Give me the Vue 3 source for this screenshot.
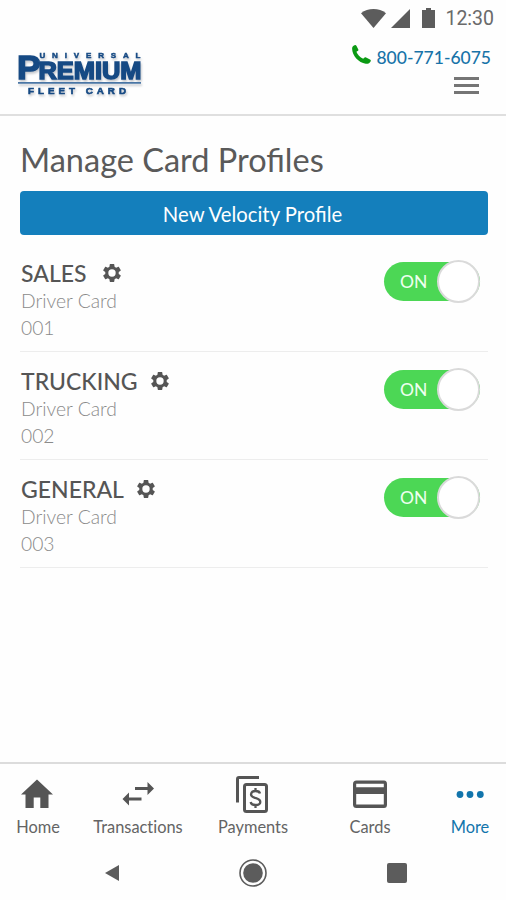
<template>
  <div class="screen">
    <div class="status-bar">
      <svg class="wifi" width="25" height="19" viewBox="0 0 25 19">
        <path d="M0 4.2C7 -1.4 18 -1.4 25 4.2L12.5 19z" />
      </svg>
      <svg class="signal" width="19" height="19" viewBox="0 0 19 19">
        <path d="M19 0v19H0z" />
      </svg>
      <svg class="battery" width="13" height="20" viewBox="0 0 13 20">
        <path d="M4 0h5v2h4v18H0V2h4z" />
      </svg>
      <span class="clock">12:30</span>
    </div>

    <header class="app-header">
      <svg class="logo" width="132" height="54" viewBox="0 0 132 54">
        <g fill="#164a84" stroke="#164a84" font-family="Liberation Sans, Arial, sans-serif" font-weight="700">
          <text x="21.5" y="14.2" font-size="8" textLength="101" stroke-width="0.5">UNIVERSAL</text>
          <g stroke-width="1.5">
            <text x="-1" y="34.7" font-size="34" textLength="23.5" lengthAdjust="spacingAndGlyphs">P</text>
            <text x="20.5" y="34.7" font-size="24" textLength="103" lengthAdjust="spacingAndGlyphs">REMIUM</text>
          </g>
          <text x="10" y="50" font-size="9.8" textLength="98" stroke-width="0.6">FLEET CARD</text>
        </g>
        <path d="M0 38.8h123" stroke="#4a76a5" stroke-width="1.8" />
      </svg>

      <div class="header-side">
        <a class="phone" href="tel:8007716075">
          <svg width="19" height="19" viewBox="0 0 19 19">
            <path
              d="M2.6.2C3.400-.1 4 .1 4.400.8L6.200 4.200C6.600 5 6.300 5.600 5.600 6L4.400 6.800C5.400 9.600 8 12.300 11.200 13.700L12.200 12.700C12.800 12.100 13.400 12 14.100 12.400L18 14.500C18.800 14.900 19 15.500 18.700 16.200C18 18 16 19 13.800 18.800C6.500 17.800 .2 10.500 .1 3.800C.1 2 1 .8 2.600 .2z"
            />
          </svg>
          <span>800-771-6075</span>
        </a>
        <button class="menu-btn" type="button" aria-label="Menu">
          <span></span>
          <span></span>
          <span></span>
        </button>
      </div>
    </header>

    <main class="content">
      <h1>Manage Card Profiles</h1>
      <button class="primary-btn" type="button">New Velocity Profile</button>

      <ul class="profiles">
        <li v-for="profile in profiles" :key="profile.code" class="profile">
          <div class="profile-info">
            <h2>
              <span>{{ profile.name }}</span>
              <svg width="18" height="18" viewBox="2 2 20 20">
                <path
                  fill-rule="evenodd"
                  d="M19.430 12.980c.04-.32.070-.64.070-.98s-.03-.66-.07-.98l2.110-1.650c.19-.15.240-.42.120-.64l-2-3.460c-.12-.22-.39-.3-.61-.22l-2.490 1c-.52-.4-1.080-.73-1.690-.98l-.38-2.650C14.460 2.180 14.250 2 14 2h-4c-.25 0-.46.180-.49.420l-.38 2.650c-.61.250-1.170.590-1.690.980l-2.490-1c-.23-.09-.49 0-.61.220l-2 3.460c-.13.220-.07.490.120.640l2.110 1.650c-.04.320-.07.650-.07.980s.03.660.070.980l-2.110 1.650c-.19.150-.24.420-.12.640l2 3.460c.12.220.390.300.610.220l2.490-1c.52.400 1.080.730 1.690.980l.38 2.650c.03.240.240.420.490.420h4c.25 0 .460-.18.490-.42l.38-2.650c.61-.25 1.170-.59 1.690-.98l2.490 1c.23.090.490 0 .610-.22l2-3.460c.12-.22.070-.49-.12-.64zM12 16.100a4.100 4.100 0 1 1 0-8.200 4.100 4.100 0 0 1 0 8.200z"
                />
              </svg>
            </h2>
            <p>{{ profile.type }}</p>
            <p>{{ profile.code }}</p>
          </div>
          <button
            class="toggle"
            :class="{ on: profile.enabled }"
            type="button"
            @click="profile.enabled = !profile.enabled"
          >
            <span class="toggle-label">{{ profile.enabled ? "ON" : "OFF" }}</span>
            <span class="toggle-knob"></span>
          </button>
        </li>
      </ul>
    </main>

    <nav class="tab-bar">
      <a
        v-for="tab in tabs"
        :key="tab.id"
        class="tab"
        :class="{ active: activeTab === tab.id }"
        @click="activeTab = tab.id"
      >
        <svg v-if="tab.id === 'home'" width="40" height="40" viewBox="0 0 40 40">
          <path d="M19 5.5L3 20.5h4.5V34h8.2V23.5h6.6V34h8.2V20.5H35z" />
        </svg>
        <svg v-else-if="tab.id === 'transactions'" width="40" height="40" viewBox="0 0 40 40">
          <path d="M17 13h12.500V8l6.500 6.500-6.500 6.500v-5H17zM23.500 23.500H11v-5L4.500 25l6.500 6.500v-5h12.500z" />
        </svg>
        <svg v-else-if="tab.id === 'payments'" width="40" height="40" viewBox="0 0 40 40">
          <g fill="none" stroke="currentColor" stroke-width="3">
            <path d="M4.500 28.500V5Q4.500 3.500 6 3.500H26" />
            <rect x="11.500" y="10.500" width="22" height="27" rx="2" />
            <path
              stroke-width="2.300"
              d="M27 19.500Q26.500 17 22.500 17T18 20.300C18 23 20.500 23.400 22.500 24S27.300 25.200 27.300 28 25 31 22.500 31 18 30.500 17.700 28M22.500 14v3.500M22.500 30.500V34"
            />
          </g>
        </svg>
        <svg v-else-if="tab.id === 'cards'" width="40" height="40" viewBox="0 0 40 40">
          <path
            fill-rule="evenodd"
            d="M6.500 6.500H34Q37 6.500 37 10v20.500Q37 34 34 34H6.500Q3 34 3 30.500V10Q3 6.500 6.500 6.500zM6.200 9.800v3.400h27.600V9.800zM6.200 20v10.600h27.600V20z"
          />
        </svg>
        <svg v-else width="40" height="40" viewBox="0 0 40 40">
          <circle cx="10" cy="20.500" r="3.400" />
          <circle cx="20" cy="20.500" r="3.400" />
          <circle cx="30.300" cy="20.500" r="3.400" />
        </svg>
        <span>{{ tab.label }}</span>
      </a>
    </nav>

    <div class="system-bar">
      <svg width="14" height="16" viewBox="0 0 14 16">
        <path d="M14 0v16L0 8z" />
      </svg>
      <svg width="28" height="28" viewBox="0 0 28 28">
        <circle cx="14" cy="14" r="13" fill="none" stroke="currentColor" stroke-width="1.600" />
        <circle cx="14" cy="14" r="9.800" />
      </svg>
      <svg width="20" height="20" viewBox="0 0 20 20">
        <rect width="20" height="20" rx="2" />
      </svg>
    </div>
  </div>
</template>

<script setup>
import { ref } from "vue";

const profiles = ref([
  { name: "SALES", type: "Driver Card", code: "001", enabled: true },
  { name: "TRUCKING", type: "Driver Card", code: "002", enabled: true },
  { name: "GENERAL", type: "Driver Card", code: "003", enabled: true },
]);

const tabs = [
  { id: "home", label: "Home" },
  { id: "transactions", label: "Transactions" },
  { id: "payments", label: "Payments" },
  { id: "cards", label: "Cards" },
  { id: "more", label: "More" },
];

const activeTab = ref("more");
</script>

<style>
body {
  margin: 0;
  background: #fefefe;
}
</style>

<style scoped>
.screen {
  display: flex;
  flex-direction: column;
  box-sizing: border-box;
  width: 506px;
  height: 900px;
  overflow: hidden;
  background: #fefefe;
  color: #555;
  font-family: Lato, sans-serif;
}

svg {
  display: block;
  fill: currentColor;
}

button {
  padding: 0;
  border: none;
  background: none;
  font-family: inherit;
  cursor: pointer;
}

.status-bar {
  display: flex;
  justify-content: flex-end;
  align-items: center;
  height: 36px;
  padding-right: 12px;
  color: #5c5c5c;
}

.signal {
  margin-left: 5px;
}

.battery {
  margin-left: 12px;
}

.clock {
  margin-left: 10px;
  font-family: Roboto, sans-serif;
  font-size: 19.5px;
  color: #6a6a6a;
}

.app-header {
  display: flex;
  justify-content: space-between;
  box-sizing: border-box;
  height: 80px;
  padding: 8px 15px 0 18px;
  border-bottom: 2px solid #dfdfdf;
}

.logo {
  overflow: visible;
  filter: drop-shadow(1px 2px 1px rgba(60, 70, 85, 0.3));
}

.header-side {
  display: flex;
  flex-direction: column;
  align-items: flex-end;
}

.phone {
  display: flex;
  gap: 5px;
  color: #1873a8;
  font-size: 17.5px;
  font-weight: 500;
  line-height: 28px;
  text-decoration: none;
}

.phone svg {
  margin-top: 1px;
  color: #0b9a13;
}

.menu-btn {
  display: flex;
  flex-direction: column;
  gap: 4px;
  margin: 5px 12px 0 0;
}

.menu-btn span {
  width: 25px;
  height: 3px;
  background: #757575;
}

.content {
  flex: 1;
  padding: 24px 18px 0 20px;
}

h1 {
  margin: 0 0 11px;
  color: #5a5a5a;
  font-size: 32.5px;
  font-weight: 400;
  line-height: 40px;
}

.primary-btn {
  display: block;
  width: 468px;
  height: 44px;
  padding: 2px 3px 0 0;
  border-radius: 4px;
  background: #147fbc;
  color: #fff;
  font-size: 20.3px;
}

.profiles {
  margin: 9px 0 0;
  padding: 0;
  list-style: none;
}

.profile {
  display: flex;
  justify-content: space-between;
  box-sizing: border-box;
  height: 108px;
  padding: 15px 8px 0 1px;
  border-bottom: 1px solid #ededed;
}

h2 {
  display: flex;
  align-items: center;
  gap: 13px;
  margin: 0;
  font-size: 23px;
  font-weight: 500;
  line-height: 28px;
}

h2 span {
  min-width: 69px;
}

.profile p {
  margin: 0;
  color: #8a8a8a;
  font-size: 19.3px;
  font-weight: 300;
  line-height: 27px;
}

.toggle {
  position: relative;
  width: 96px;
  height: 39px;
  margin-top: 3px;
  border-radius: 20px;
  background: #bbb;
  text-align: right;
}

.toggle.on {
  background: #4cd755;
  text-align: left;
}

.toggle-label {
  display: block;
  padding: 0 16px;
  color: #effff0;
  font-size: 17.5px;
}

.toggle-knob {
  position: absolute;
  top: -2px;
  left: 0;
  box-sizing: border-box;
  width: 43px;
  height: 43px;
  border: 2px solid #dadada;
  border-radius: 50%;
  background: #fff;
}

.toggle.on .toggle-knob {
  right: 0;
  left: auto;
}

.tab-bar {
  display: grid;
  grid-template-columns: 76px 124px 106px 128px 72px;
  box-sizing: border-box;
  height: 84px;
  padding-top: 10px;
  border-top: 2px solid #dcdcdc;
}

.tab {
  display: flex;
  flex-direction: column;
  align-items: center;
  color: #555;
  font-size: 16.4px;
  font-variant-ligatures: none;
  line-height: 20px;
  cursor: pointer;
}

.tab span {
  margin-top: 3px;
}

.tab:not(.active) span {
  color: #646464;
}

.tab.active {
  color: #1275ac;
}

.system-bar {
  display: flex;
  justify-content: space-between;
  align-items: center;
  height: 54px;
  padding: 0 99px 0 105px;
  color: #5c5c5c;
}
</style>
